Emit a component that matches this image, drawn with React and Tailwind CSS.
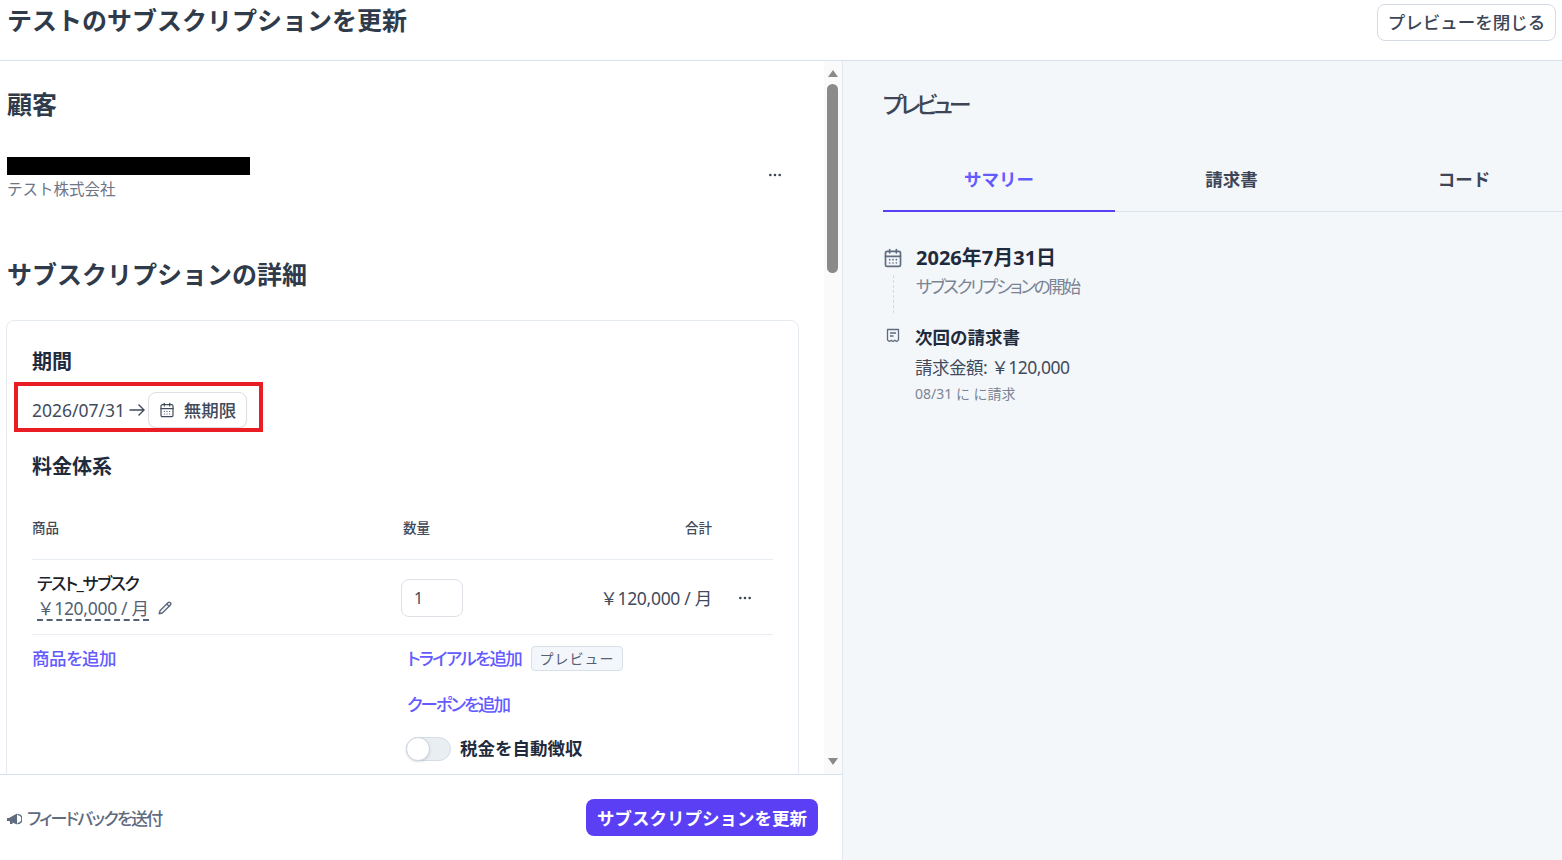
import React from "react";
import { CalendarDays, Pencil, Ellipsis } from "lucide-react";

const jp = { fontFamily: '"Noto Sans", "Noto Sans CJK JP", sans-serif' };

const ArrowIcon = () => (
  <svg width="16" height="14" viewBox="0 0 16 14" fill="none" stroke="#414b5c" strokeWidth="1.4" className="ml-[4px] mr-[3px]">
    <path d="M0.500 7h14.500M9.500 1.500 15 7l-5.500 5.500" />
  </svg>
);

const ReceiptIcon = () => (
  <svg width="14" height="15" viewBox="0 0 14 15" fill="none" stroke="#5f6b7e" strokeWidth="1.3">
    <path d="M1.5 1.5h11v10.500l-2 1.500-1.700-1.300-1.800 1.300-1.800-1.300-1.700 1.300-2-1.500z" strokeLinejoin="round" />
    <path d="M4 5h6M4 8h3.500" />
  </svg>
);

const MegaphoneIcon = () => (
  <svg width="15" height="12" viewBox="0 0 15 12" fill="#5f6b7e">
    <path d="M0 5h2l8-4.500v11L2 8H0z" />
    <path d="M10.500 1.500a4.500 4.500 0 0 1 0 9" fill="none" stroke="#5f6b7e" strokeWidth="1.600" />
    <rect x="3" y="8" width="2.500" height="3" />
  </svg>
);

const ScrollBar = () => (
  <div className="w-[18px] pr-[1px] shrink-0 flex flex-col items-center bg-[#fafafa]">
    <div className="h-[23px] flex items-center justify-center pt-[1px]">
      <div className="w-0 h-0 border-x-[5px] border-x-transparent border-b-[7px] border-b-[#8a8a8a]" />
    </div>
    <div className="w-[11px] h-[189px] rounded-full bg-[#8a8a8a]" />
    <div className="flex-1" />
    <div className="h-[24px] flex items-center justify-center pb-[1px]">
      <div className="w-0 h-0 border-x-[5px] border-x-transparent border-t-[7px] border-t-[#8a8a8a]" />
    </div>
  </div>
);

const App = () => {
  return (
    <div className="w-[1562px] h-[860px] overflow-hidden bg-white text-[#1f2b3d] flex flex-col" style={jp}>
      <header className="h-[61px] shrink-0 border-b border-[#d8e2ee] flex justify-between pl-[7px] pr-[6px]">
        <h1 className="text-[25px] leading-[40px] font-bold text-[#2f3a4a]">テストのサブスクリプションを更新</h1>
        <button className="mt-[4px] h-[37px] w-[179px] rounded-[8px] border border-[#d5dbe3] bg-white text-[17.500px] font-medium text-[#3c4657]">
          プレビューを閉じる
        </button>
      </header>

      <div className="flex-1 flex min-h-0">
        <div className="w-[843px] shrink-0 border-r border-[#e3e8ee] flex flex-col">
          <div className="h-[713px] shrink-0 flex overflow-hidden">
            <div className="flex-1 pl-[7px] pr-[7px] overflow-hidden">
              <h2 className="text-[25px] leading-[32px] font-bold mt-[27px] text-[#2f3a4a]">顧客</h2>
              <div className="mt-[37px] flex justify-between items-start">
                <div>
                  <div className="w-[243px] h-[18px] bg-black" />
                  <div className="text-[15.500px] leading-[24px] text-[#6c7686] mt-[2px]">テスト株式会社</div>
                </div>
                <Ellipsis size={16} className="mt-[10px] mr-[34px] text-[#3c4657]" />
              </div>
              <h2 className="text-[25px] leading-[32px] font-bold mt-[57px] text-[#2f3a4a]">サブスクリプションの詳細</h2>

              <div className="mt-[30px] -ml-[1px] w-[793px] h-[600px] rounded-[8px] border border-[#e6ebf1] px-[25px]">
                <h3 className="mt-[27px] text-[20px] leading-[28px] font-bold">期間</h3>
                <div className="relative mt-[16px] flex items-center h-[36px] text-[17.500px] text-[#414b5c]">
                  <span>2026/07/31</span>
                  <ArrowIcon />
                  <button className="h-[36px] w-[99px] flex items-center justify-center gap-[9px] rounded-[8px] border border-[#dcdfe4] bg-white text-[17.500px] font-medium shadow-[0_1px_1px_rgba(0,0,0,0.05)]">
                    <CalendarDays size={16} strokeWidth={1.800} />
                    無期限
                  </button>
                  <div className="absolute -left-[18px] -top-[10px] w-[249px] h-[50px] border-[4px] border-[#ea1c24]" />
                </div>

                <h3 className="mt-[25px] text-[20px] leading-[28px] font-bold">料金体系</h3>

                <div className="mt-[37px] h-[42px] border-b border-[#e8edf3] flex text-[13.500px] text-[#414b5c] font-medium">
                  <div className="w-[369px] leading-[20px]">商品</div>
                  <div className="w-[252px] leading-[20px] pl-[2px]">数量</div>
                  <div className="w-[59px] leading-[20px] text-right">合計</div>
                </div>

                <div className="h-[75px] pt-[2px] border-b border-[#e8edf3] flex items-center relative">
                  <div className="w-[369px] pl-[5px]">
                    <div className="text-[17px] leading-[24px] font-medium text-[#1a1f2b] [font-feature-settings:'palt'] tracking-[-1.400px] -mt-[2px]">テスト_サブスク</div>
                    <div className="flex items-center gap-[9px] h-[26px]">
                      <span className="text-[17.500px] leading-[22px] text-[#556175] border-b-2 border-dashed border-[#556175] tracking-[-0.300px]">￥120,000 / 月</span>
                      <Pencil size={14} strokeWidth={2.500} className="text-[#5f6b7e] -mt-[3px]" />
                    </div>
                  </div>
                  <div className="w-[62px] h-[38px] rounded-[8px] border border-[#dde1e7] flex items-center pl-[12px] text-[16px] text-[#414b5c]">1</div>
                  <div className="flex-1 text-right text-[17.500px] text-[#414b5c] tracking-[-0.300px] mr-[61px]">￥120,000 / 月</div>
                  <Ellipsis size={16} className="absolute right-[20px] text-[#3c4657]" />
                </div>

                <div className="flex">
                  <div className="w-[375px] text-[17.500px] leading-[24px] font-medium text-[#635bff] pt-[11px] [font-feature-settings:'palt'] tracking-[-0.400px]">
                    商品を追加
                  </div>
                  <div className="pt-[11px]">
                    <div className="flex items-center gap-[10px] h-[24px]">
                      <span className="text-[17.500px] font-medium text-[#635bff] [font-feature-settings:'palt'] tracking-[-1.700px]">トライアルを追加</span>
                      <span className="h-[25px] w-[92px] flex items-center justify-center rounded-[4px] border border-[#d8e0ea] bg-[#f3f6fa] text-[14px] text-[#556175] tracking-[1px]">プレビュー</span>
                    </div>
                    <div className="mt-[22px] text-[17.500px] leading-[24px] font-medium text-[#635bff] [font-feature-settings:'palt'] tracking-[-2.100px]">クーポンを追加</div>
                    <div className="mt-[21px] -ml-[1px] flex items-center gap-[9px]">
                      <div className="w-[45px] h-[24px] rounded-full bg-[#e9eef3] border border-[#d5dde7] relative">
                        <div className="absolute -left-[1px] -top-[1px] w-[24px] h-[24px] rounded-full bg-white border border-[#cdd5df] shadow-sm" />
                      </div>
                      <span className="text-[17.500px] font-bold -mt-[2px]">税金を自動徴収</span>
                    </div>
                  </div>
                </div>
              </div>
            </div>
            <ScrollBar />
          </div>

          <div className="flex-1 border-t border-[#d8e2ee] flex items-center justify-between pl-[7px] pr-[24px]">
            <div className="flex items-center gap-[5px] pt-[2px] text-[17px] font-medium text-[#5f6b7e] [font-feature-settings:'palt'] tracking-[-1.700px]">
              <MegaphoneIcon />
              フィードバックを送付
            </div>
            <button className="w-[232px] h-[37px] pt-[2px] rounded-[8px] bg-[#5a3ff5] text-white text-[17.500px] font-bold">
              サブスクリプションを更新
            </button>
          </div>
        </div>

        <div className="flex-1 bg-[#f4f7fa] pl-[40px] overflow-hidden">
          <h2 className="mt-[26px] text-[23px] leading-[34px] font-medium text-[#3c4657] [font-feature-settings:'palt'] tracking-[-4px]">プレビュー</h2>

          <div className="mt-[34px] h-[57px] grid grid-cols-[232px_233px_232px] border-b border-[#dde3ea]">
            <div className="border-b-2 border-[#5a3ff5] h-[57px] flex justify-center pt-[12px] text-[17.500px] leading-[24px] font-bold text-[#635bff]">サマリー</div>
            <div className="flex justify-center pt-[12px] text-[17.500px] leading-[24px] font-bold text-[#3c4657]">請求書</div>
            <div className="flex justify-center pt-[12px] text-[17.500px] leading-[24px] font-bold text-[#3c4657]">コード</div>
          </div>

          <div className="mt-[32px] flex">
            <div className="w-[33px] shrink-0 flex flex-col items-start pt-[4px]">
              <CalendarDays size={20} strokeWidth={2} className="text-[#5f6b7e]" />
              <div className="ml-[10px] mt-[7px] h-[38px] border-l border-dashed border-[#d5dae1]" />
            </div>
            <div>
              <div className="text-[20px] leading-[28px] font-bold text-[#1f2b3d]">2026年7月31日</div>
              <div className="text-[17.500px] leading-[28px] text-[#7a8494] [font-feature-settings:'palt'] tracking-[-2.300px]">サブスクリプションの開始</div>
            </div>
          </div>

          <div className="mt-[11px] flex">
            <div className="w-[32px] shrink-0 pl-[3px] pt-[4px]">
              <ReceiptIcon />
            </div>
            <div>
              <div className="text-[17.500px] leading-[26px] font-bold text-[#1f2b3d]">次回の請求書</div>
              <div className="mt-[3px] text-[17.500px] leading-[28px] text-[#414b5c] tracking-[-0.500px]">請求金額: ￥120,000</div>
              <div className="mt-[2px] text-[14px] leading-[22px] text-[#7a8494]">08/31 に に請求</div>
            </div>
          </div>
        </div>
      </div>
    </div>
  );
};

export default App;
